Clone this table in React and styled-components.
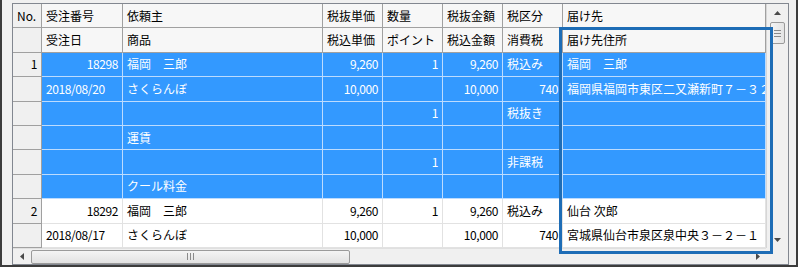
import React from 'react';
import styled, { createGlobalStyle } from 'styled-components';

const GlobalStyle = createGlobalStyle`
  html, body {
    margin: 0;
    padding: 0;
    background: #f0f0f0;
  }
  * {
    box-sizing: border-box;
  }
`;

const COLS = '29px 81px 200px 60px 60px 60px 60px 203px';

const Window = styled.div`
  position: relative;
  width: 798px;
  height: 267px;
  background: #f0f0f0;
  border-left: 2px solid #3c3c3c;
  border-right: 2px solid #3c3c3c;
  border-bottom: 2px solid #3c3c3c;
  padding: 3px 7px 0 10px;
  font-family: "Noto Sans CJK JP", "Noto Sans", sans-serif;
  font-size: 12px;
`;

const GridFrame = styled.div`
  display: grid;
  grid-template-columns: 753px 22px;
  grid-template-rows: 244px 16px;
  width: 777px;
  height: 262px;
  border: 1px solid #828790;
  background: #fff;
`;

const Body = styled.div`
  overflow: hidden;
`;

const Row = styled.div`
  display: grid;
  grid-template-columns: ${COLS};
  height: 24.4px;
`;

const cellColors = {
  header: { bg: '#f7f7f7', line: '#a0a0a0', fg: '#000' },
  rowhead: { bg: '#f0f0f0', line: '#a0a0a0', fg: '#000' },
  selected: { bg: '#3399ff', line: '#bcdcff', fg: '#fff' },
  plain: { bg: '#fff', line: '#e2e2e2', fg: '#000' },
};

const Cell = styled.div`
  display: flex;
  align-items: center;
  justify-content: ${p => (p.$right ? 'flex-end' : 'flex-start')};
  padding: 0 ${p => (p.$right ? '4px' : '0')} 0 ${p => (p.$right ? '0' : '4px')};
  background: ${p => cellColors[p.$kind].bg};
  color: ${p => cellColors[p.$kind].fg};
  border-right: 1px solid ${p => cellColors[p.$kind].line};
  border-bottom: 1px solid ${p => cellColors[p.$kind].line};
  white-space: nowrap;
  overflow: hidden;
  letter-spacing: ${p => (p.$num ? '-0.4px' : '0')};
  line-height: 1;
`;

const VScroll = styled.div`
  display: flex;
  flex-direction: column;
  align-items: center;
  background: #f0f0f0;
  border-left: 1px solid #d6d6d6;
`;

const HScroll = styled.div`
  display: flex;
  align-items: center;
  background: #f0f0f0;
  border-top: 1px solid #e0e0e0;
`;

const Corner = styled.div`
  background: #f0f0f0;
  display: flex;
  align-items: flex-end;
  justify-content: flex-end;
  padding: 0 10px 2px 0;
`;

const ArrowBtn = styled.div`
  width: ${p => (p.$vertical ? '100%' : '17px')};
  height: ${p => (p.$vertical ? '17px' : '100%')};
  display: flex;
  align-items: center;
  justify-content: center;
  flex-shrink: 0;
`;

const VThumb = styled.div`
  width: 15px;
  height: 22px;
  margin-top: 1px;
  border: 1px solid #9a9a9a;
  border-radius: 2px;
  background: linear-gradient(to right, #f4f4f4, #e4e4e4);
  display: flex;
  flex-direction: column;
  align-items: center;
  justify-content: center;
  gap: 2px;
`;

const GripLine = styled.div`
  width: ${p => (p.$vertical ? '7px' : '1px')};
  height: ${p => (p.$vertical ? '1px' : '7px')};
  background: #8a8a8a;
`;

const HThumb = styled.div`
  width: 319px;
  height: 14px;
  margin-left: 1px;
  border: 1px solid #9a9a9a;
  border-radius: 2px;
  background: linear-gradient(to bottom, #f4f4f4, #e2e2e2);
  display: flex;
  align-items: center;
  justify-content: center;
  gap: 2px;
`;

const Track = styled.div`
  flex: 1;
`;

const Highlight = styled.div`
  position: absolute;
  left: 557px;
  top: 27px;
  width: 214px;
  height: 227px;
  border: 3px solid #1e6db6;
  pointer-events: none;
`;

const Tri = ({ dir }) => {
  const pts = {
    up: '0,4 3.5,0 7,4',
    down: '0,0 3.5,4 7,0',
    left: '4,0 0,3.5 4,7',
    right: '0,0 4,3.5 0,7',
  }[dir];
  const vert = dir === 'up' || dir === 'down';
  return (
    <svg width={vert ? 7 : 4} height={vert ? 4 : 7} viewBox={vert ? '0 0 7 4' : '0 0 4 7'}>
      <polygon points={pts} fill="#4a4a4a" />
    </svg>
  );
};

const headers = [
  ['No.', '受注番号', '依頼主', '税抜単価', '数量', '税抜金額', '税区分', '届け先'],
  ['', '受注日', '商品', '税込単価', 'ポイント', '税込金額', '消費税', '届け先住所'],
];

const rows = [
  { no: '1', sel: true, cells: ['18298', '福岡　三郎', '9,260', '1', '9,260', '税込み', '福岡　三郎'] },
  { sel: true, cells: ['2018/08/20', 'さくらんぼ', '10,000', '', '10,000', '740', '福岡県福岡市東区二又瀬新町７－３２'] },
  { sel: true, cells: ['', '', '', '1', '', '税抜き', ''] },
  { sel: true, cells: ['', '運賃', '', '', '', '', ''] },
  { sel: true, cells: ['', '', '', '1', '', '非課税', ''] },
  { sel: true, cells: ['', 'クール料金', '', '', '', '', ''] },
  { no: '2', cells: ['18292', '福岡　三郎', '9,260', '1', '9,260', '税込み', '仙台 次郎'] },
  { cells: ['2018/08/17', 'さくらんぼ', '10,000', '', '10,000', '740', '宮城県仙台市泉区泉中央３－２－１　：'] },
];

const isNum = s => /^[\d,]+$/.test(s);
const isDigits = s => /^[\d,/]+$/.test(s);

const App = () => {
  return (
    <>
      <GlobalStyle />
      <Window>
        <GridFrame>
          <Body>
            {headers.map((h, i) => (
              <Row key={'h' + i}>
                {h.map((t, j) => (
                  <Cell key={j} $kind={j === 0 ? 'rowhead' : 'header'}>{t}</Cell>
                ))}
              </Row>
            ))}
            {rows.map((r, i) => (
              <Row key={i}>
                <Cell $kind="rowhead" $right $num>{r.no || ''}</Cell>
                {r.cells.map((t, j) => (
                  <Cell
                    key={j}
                    $kind={r.sel ? 'selected' : 'plain'}
                    $right={isNum(t)}
                    $num={isDigits(t)}
                  >
                    {t}
                  </Cell>
                ))}
              </Row>
            ))}
          </Body>
          <VScroll>
            <ArrowBtn $vertical><Tri dir="up" /></ArrowBtn>
            <VThumb>
              <GripLine $vertical />
              <GripLine $vertical />
              <GripLine $vertical />
            </VThumb>
            <Track />
            <ArrowBtn $vertical><Tri dir="down" /></ArrowBtn>
          </VScroll>
          <HScroll>
            <ArrowBtn><Tri dir="left" /></ArrowBtn>
            <HThumb>
              <GripLine />
              <GripLine />
              <GripLine />
            </HThumb>
            <Track />
            <ArrowBtn><Tri dir="right" /></ArrowBtn>
          </HScroll>
          <Corner />
        </GridFrame>
        <Highlight />
      </Window>
    </>
  );
};

export default App;
